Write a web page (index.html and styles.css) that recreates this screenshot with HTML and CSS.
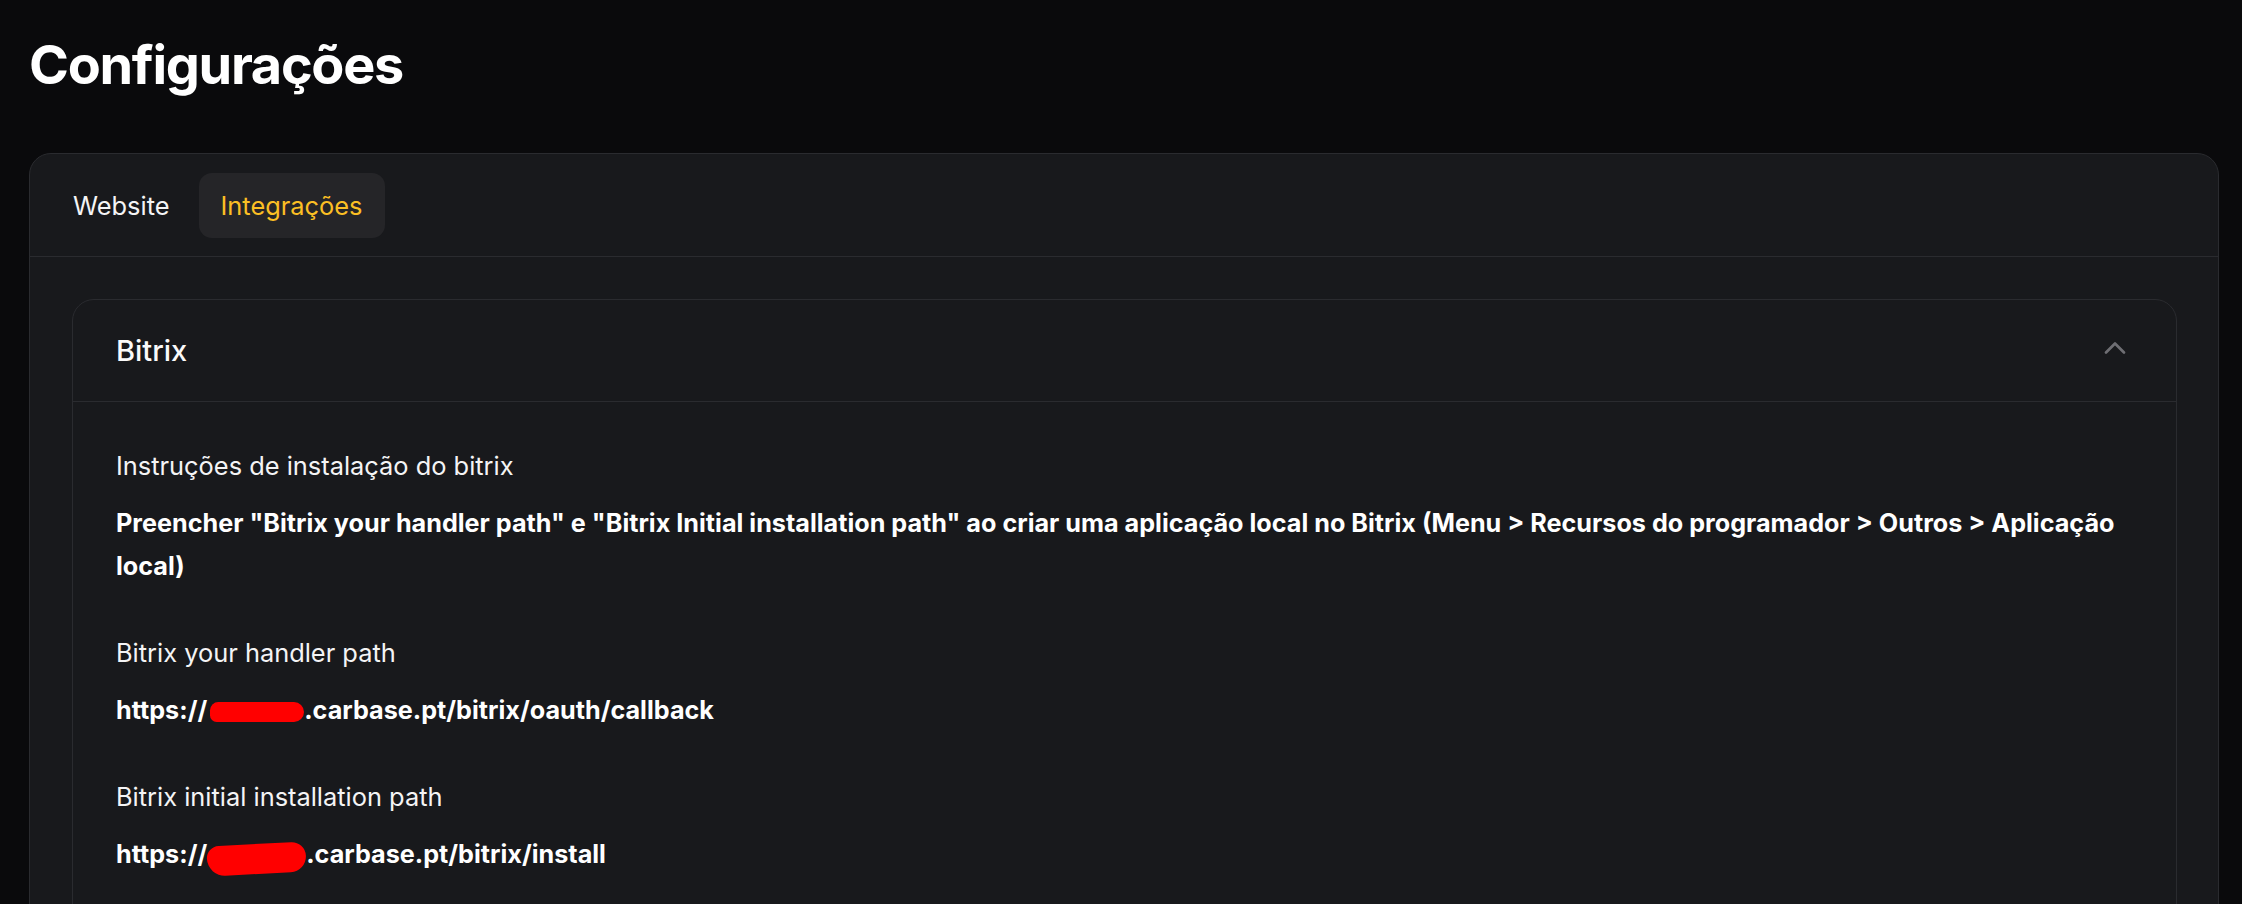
FILE: index.html
```html
<!DOCTYPE html>
<html lang="pt">
<head>
<meta charset="utf-8">
<title>Configurações</title>
<link rel="stylesheet" href="styles.css">
</head>
<body>
<main class="page">
  <h1 class="title">Configurações</h1>
  <section class="card">
    <nav class="tabs">
      <button class="tab">Website</button>
      <button class="tab tab-active">Integrações</button>
    </nav>
    <div class="card-body">
      <div class="accordion">
        <div class="acc-header">
          <span class="acc-title">Bitrix</span>
          <svg class="chev" viewBox="0 0 24 24" fill="none" stroke="currentColor" stroke-width="1.8" stroke-linecap="round" stroke-linejoin="round"><path d="m18 15-6-6-6 6"/></svg>
        </div>
        <div class="acc-body">
          <div class="field">
            <div class="label">Instruções de instalação do bitrix</div>
            <div class="value">Preencher "Bitrix your handler path" e "Bitrix Initial installation path" ao criar uma aplicação local no Bitrix (Menu &gt; Recursos do programador &gt; Outros &gt; Aplicação local)</div>
          </div>
          <div class="field">
            <div class="label">Bitrix your handler path</div>
            <div class="value">https://<span class="redact redact-a"></span>.carbase.pt/bitrix/oauth/callback</div>
          </div>
          <div class="field">
            <div class="label">Bitrix initial installation path</div>
            <div class="value">https://<span class="redact redact-b"></span>.carbase.pt/bitrix/install</div>
          </div>
        </div>
      </div>
    </div>
  </section>
</main>
</body>
</html>
```
FILE: styles.css
```css
* { box-sizing: border-box; }
html, body {
  margin: 0;
  padding: 0;
  background: #0a0a0c;
  color: #ffffff;
  font-family: Inter, "Noto Sans", "Liberation Sans", sans-serif;
  overflow: hidden;
}
.page {
  padding: 32px 23px 0 29px;
}
.title {
  margin: 0 0 55px 0;
  font-size: 54px;
  line-height: 66px;
  font-weight: 700;
  letter-spacing: -1.3px;
  color: #ffffff;
}
.card {
  background: #18191c;
  border: 1px solid #2a2b2f;
  border-radius: 22px;
}
.tabs {
  display: flex;
  gap: 7px;
  padding: 19px 21px 18px;
  border-bottom: 1px solid #2a2b2f;
}
.tab {
  height: 65px;
  padding: 0 22px;
  border: 0;
  border-radius: 13px;
  background: transparent;
  color: #f4f4f5;
  font-family: inherit;
  font-size: 25.4px;
  line-height: 65px;
  font-weight: 400;
}
.tab-active {
  background: #252528;
  color: #fbbf24;
}
.card-body {
  padding: 42px 41px 200px 42px;
}
.accordion {
  border: 1px solid #2a2b2f;
  border-radius: 22px;
  background: #18191c;
  min-height: 800px;
}
.acc-header {
  height: 102px;
  display: flex;
  align-items: center;
  justify-content: space-between;
  padding: 0 43px 0 43px;
  border-bottom: 1px solid #2a2b2f;
}
.acc-title {
  font-size: 29px;
  font-weight: 500;
  line-height: 36px;
  color: #fafafa;
}
.chev {
  width: 36px;
  height: 36px;
  color: #6e6e73;
  margin-bottom: 5px;
}
.acc-body {
  padding: 43px 43px 40px 43px;
  display: flex;
  flex-direction: column;
  gap: 44px;
}
.field {
  display: flex;
  flex-direction: column;
  gap: 15px;
}
.label {
  font-size: 25.4px;
  line-height: 42px;
  font-weight: 400;
  color: #f4f4f5;
}
.value {
  font-size: 25.2px;
  line-height: 43px;
  font-weight: 700;
  color: #ffffff;
}
.redact {
  display: inline-block;
  background: #ff0000;
  vertical-align: middle;
}
.redact-a {
  width: 94px;
  height: 20px;
  border-radius: 10px 12px 12px 8px;
  margin-left: 3px;
}
.redact-b {
  width: 99px;
  height: 30px;
  border-radius: 14px 16px 18px 20px;
  transform: rotate(-3deg);
  margin-top: 6px;
}
```
